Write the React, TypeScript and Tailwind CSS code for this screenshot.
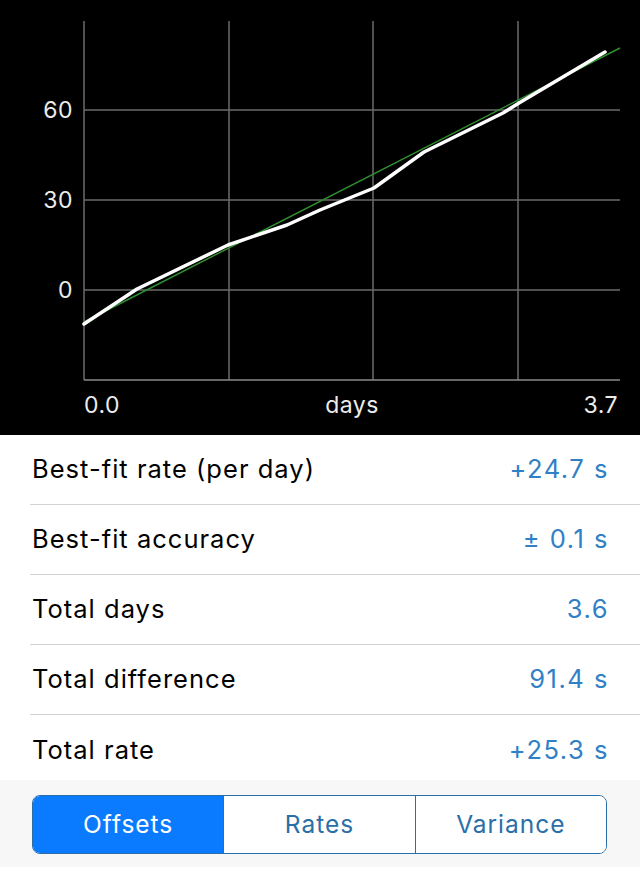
const rows = [
  { label: 'Best-fit rate (per day)', value: '+24.7 s' },
  { label: 'Best-fit accuracy', value: '± 0.1 s' },
  { label: 'Total days', value: '3.6' },
  { label: 'Total difference', value: '91.4 s' },
  { label: 'Total rate', value: '+25.3 s' },
];

// sample offsets in screen coordinates of the plot
const points = [
  [84, 324], [137, 289], [228, 245], [287, 225], [320, 210], [374, 188],
  [424, 152], [503, 113], [519, 103], [605, 52],
];

function Chart() {
  const xs = [84, 229, 373, 518];
  const ys = [110, 200, 290];
  return (
    <svg width="640" height="435" className="block">
      <rect width="640" height="435" fill="#000" />
      {xs.map((x) => (
        <line key={x} x1={x} y1={21} x2={x} y2={380} stroke="#6b6b6b" strokeWidth="1.5" />
      ))}
      {ys.map((y) => (
        <line key={y} x1={84} y1={y} x2={620} y2={y} stroke="#6b6b6b" strokeWidth="1.5" />
      ))}
      <line x1={84} y1={380} x2={620} y2={380} stroke="#8a8a8a" strokeWidth="1.5" />
      <line x1={84} y1={322} x2={620} y2={48} stroke="#2f8f2f" strokeWidth="1.5" />
      <polyline
        points={points.map((p) => p.join(',')).join(' ')}
        fill="none"
        stroke="#fff"
        strokeWidth="3.5"
        strokeLinejoin="round"
        strokeLinecap="round"
      />
      <g fill="#ececec" fontFamily="Inter, 'Noto Sans', sans-serif" fontSize="23" letterSpacing="0.5">
        <text x="73" y="118" textAnchor="end">60</text>
        <text x="73" y="208" textAnchor="end">30</text>
        <text x="73" y="298" textAnchor="end">0</text>
        <text x="84" y="413">0.0</text>
        <text x="352" y="413" textAnchor="middle">days</text>
        <text x="618" y="413" textAnchor="end">3.7</text>
      </g>
    </svg>
  );
}

export default function App() {
  return (
    <div className="w-[640px] h-[874px] bg-white flex flex-col overflow-hidden font-['Inter','Noto_Sans',sans-serif]">
      <Chart />

      {/* Stats */}
      <div className="flex flex-col">
        {rows.map((r, i) => (
          <div
            key={r.label}
            className={
              i < rows.length - 1
                ? 'ml-[30px] h-[70px] flex items-center justify-between pl-[2px] pr-[31px] border-b-[1.5px] border-[#d3d3d6]'
                : 'ml-[30px] h-[65px] flex items-center justify-between pl-[2px] pr-[31px] pt-[5px]'
            }
          >
            <span className="text-[25.5px] tracking-[0.04em] text-black">{r.label}</span>
            <span className="text-[25.5px] tracking-[0.06em] text-[#2f80c6]">{r.value}</span>
          </div>
        ))}
      </div>

      {/* Segmented control */}
      <div className="bg-[#f7f7f8] h-[87px] pt-[15px] px-[32px] pr-[33px]">
        <div className="flex h-[59px] rounded-[8px] border-[1.5px] border-[#2b6fa9] overflow-hidden">
          <div className="flex-1 flex items-center justify-center bg-[#0a7bff] text-white text-[24.5px] tracking-[0.04em]">
            Offsets
          </div>
          <div className="flex-1 flex items-center justify-center bg-white text-[#2b6fa9] text-[24.5px] tracking-[0.04em] border-l-[1.5px] border-[#2b6fa9]">
            Rates
          </div>
          <div className="flex-1 flex items-center justify-center bg-white text-[#2b6fa9] text-[24.5px] tracking-[0.04em] border-l-[1.5px] border-[#2b6fa9]">
            Variance
          </div>
        </div>
      </div>
    </div>
  );
}
